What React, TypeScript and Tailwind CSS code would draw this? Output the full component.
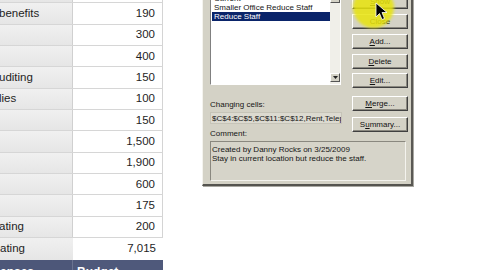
import React from 'react';

const rows: { label: string; value: string }[] = [
  { label: '', value: '' },
  { label: 'benefits', value: '190' },
  { label: '', value: '300' },
  { label: '', value: '400' },
  { label: 'uditing', value: '150' },
  { label: 'lies', value: '100' },
  { label: '', value: '150' },
  { label: '', value: '1,500' },
  { label: '', value: '1,900' },
  { label: '', value: '600' },
  { label: '', value: '175' },
  { label: 'ating', value: '200' },
];

const buttons: { label: React.ReactNode; h: string; mt: string; hot?: boolean }[] = [
  { label: <><u>S</u>how</>, h: 'h-[15px]', mt: 'mt-0', hot: true },
  { label: 'Close', h: 'h-[15px]', mt: 'mt-[5px]' },
  { label: <><u>A</u>dd...</>, h: 'h-[15px]', mt: 'mt-[5px]' },
  { label: <><u>D</u>elete</>, h: 'h-[15px]', mt: 'mt-[5px]' },
  { label: <><u>E</u>dit...</>, h: 'h-[15px]', mt: 'mt-[4px]' },
  { label: <><u>M</u>erge...</>, h: 'h-[15px]', mt: 'mt-[8px]' },
  { label: <>S<u>u</u>mmary...</>, h: 'h-[15px]', mt: 'mt-[6px]' },
];

const Sheet: React.FC = () => (
  <div className="w-[163px] shrink-0 flex flex-col mt-[-18px] text-[11.5px] text-[#1e1e1e]" style={{ fontFamily: '"Liberation Sans", Arial, sans-serif' }}>
    {rows.map((r, i) => (
      <div key={i} className="flex h-[21.35px] border-b border-[#d6d6d6]">
        <div className="w-[73px] bg-gradient-to-b from-[#f0f0f0] to-[#e6e6e6] border-r border-[#d0d0d0] flex items-center whitespace-nowrap overflow-hidden">
          <span className="ml-[-1px]">{r.label}</span>
        </div>
        <div className="flex-1 bg-white border-r border-[#d4d4d4] flex items-center justify-end pr-[7px]">{r.value}</div>
      </div>
    ))}
    <div className="flex h-[21.5px]">
      <div className="w-[73px] bg-gradient-to-b from-[#f0f0f0] to-[#e6e6e6] flex items-center">ating</div>
      <div className="flex-1 bg-white flex items-center justify-end pr-[7px]">7,015</div>
    </div>
    <div className="flex h-[20px] text-white font-bold text-[12px]">
      <div className="w-[73px] bg-[#4d5779] pt-[3px] border-r border-[#6a7390]">enses</div>
      <div className="flex-1 bg-[#4f597b] pt-[3px] pl-[4px]">Budget</div>
    </div>
  </div>
);

const Btn: React.FC<{ children: React.ReactNode; className: string }> = ({ children, className }) => (
  <div className={`w-[56px] ${className} bg-[#d4d2c6] border border-t-white border-l-white border-r-[#404040] border-b-[#404040] shadow-[inset_-1px_-1px_0_#8a887f] flex items-center justify-center text-[8px] text-[#111] leading-none`}>
    {children}
  </div>
);

const Dialog: React.FC = () => (
  <div className="relative ml-[39px] mt-[-30px] w-[211px] h-[216px] shrink-0 bg-[#d4d2c6] border-l border-l-[#f4f3ee] border-r-2 border-r-[#5a5954] border-b-2 border-b-[#55544f] shadow-[1px_1px_0_#a9a8a2] text-[8px] text-[#151515] leading-[9px]" style={{ fontFamily: '"Liberation Sans", Arial, sans-serif' }}>
    <div className="flex pl-[7px] pr-[3px]">
      <div className="w-[131px] flex flex-col">
        <div className="h-[115px] bg-white border border-t-[#808080] border-l-[#808080] border-r-white border-b-white flex">
          <div className="flex-1 flex flex-col pt-[22.5px] pl-px">
            <div className="h-[9px] pl-[2px] whitespace-nowrap">Current</div>
            <div className="h-[9px] pl-[2px] whitespace-nowrap">Smaller Office Reduce Staff</div>
            <div className="h-[9px] pl-[2px] bg-[#0a246a] text-white">Reduce Staff</div>
          </div>
          <div className="w-[10px] bg-[#f0efe9] flex flex-col justify-between">
            <div className="h-[10px] mt-[22px] bg-[#d4d2c6] border border-t-white border-l-white border-r-[#555] border-b-[#555]" />
            <div className="h-[9px] mb-[2px] bg-[#d4d2c6] border border-t-white border-l-white border-r-[#555] border-b-[#555] flex items-center justify-center">
              <svg width="5" height="3" viewBox="0 0 5 3"><path d="M0 0h5L2.5 3z" fill="#222" /></svg>
            </div>
          </div>
        </div>
        <div className="mt-[15px] whitespace-nowrap">Changing cells:</div>
        <div className="mt-[3px] h-[12px] w-[132px] bg-[#dcdad0] border border-[#c6c4b8] pl-px flex items-center whitespace-nowrap overflow-hidden">
          $C$4:$C$5,$C$11:$C$12,Rent,Telep
        </div>
      </div>
      <div className="ml-auto mt-[24px] flex flex-col">
        {buttons.map((b, i) => (
          <Btn key={i} className={`${b.h} ${b.mt}`}>{b.label}</Btn>
        ))}
      </div>
    </div>
    <div className="pl-[7px] mt-[-3px]">Comment:</div>
    <div className="ml-[7px] mt-[3px] w-[196px] h-[40px] border border-t-[#8a887f] border-l-[#8a887f] border-r-[#f4f3ee] border-b-[#f4f3ee] bg-[#d6d4c9] pl-px pt-[3px]">
      <div>Created by Danny Rocks on 3/25/2009</div>
      <div>Stay in current location but reduce the staff.</div>
    </div>

    {/* cursor highlight */}
    <div className="absolute left-[150px] top-[17px] w-[41px] h-[41px] rounded-full bg-[#e8e40c]/85 blur-[1.5px] pointer-events-none" />
    <svg className="absolute left-[172px] top-[32px] pointer-events-none" width="13" height="19" viewBox="0 0 13 19">
      <path d="M1 1 L1 15 L4.5 11.5 L7 17.5 L9.5 16.5 L7 10.5 L12 10.5 Z" fill="#000" stroke="#fff" strokeWidth="0.8" />
    </svg>
  </div>
);

export default function App() {
  return (
    <div className="w-[480px] h-[270px] overflow-hidden bg-white flex items-start">
      <Sheet />
      <Dialog />
    </div>
  );
}
